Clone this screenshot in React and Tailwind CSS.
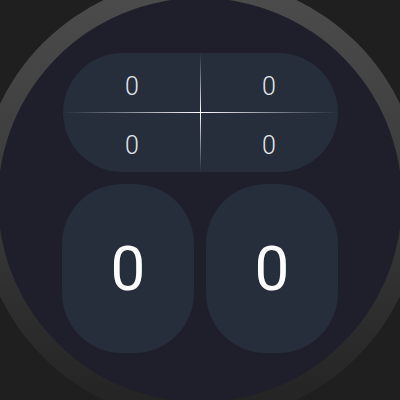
import React from 'react';

const Cell = ({ value }) => (
    <div className="flex items-center justify-center text-[25px] font-light text-[#e4e6ea] leading-none">
        {value}
    </div>
);

const Score = ({ value }) => (
    <div className="w-[132px] h-[169px] rounded-[60px] bg-[#262d3b] flex items-center justify-center text-[62px] text-white leading-none">
        {value}
    </div>
);

const App = () => {
    const sets = [0, 0, 0, 0];

    return (
        <div className="w-[400px] h-[400px] overflow-hidden bg-[#1f1f1f] flex items-center justify-center" style={{ fontFamily: 'Roboto, "Liberation Sans", sans-serif' }}>
            <div className="shrink-0 w-[444px] h-[444px] rounded-full bg-gradient-to-b from-[#4d4d4d] via-[#3a3a3a] to-[#222222] flex items-center justify-center">
                <div className="w-[404px] h-[404px] rounded-full bg-[#1f1f2c] flex flex-col items-center pt-[55px] gap-3">
                    <div className="relative w-[275px] h-[119px] rounded-full bg-[#262d3b] grid grid-cols-2 grid-rows-[62px_57px] pl-[1px] pt-[2px]">
                        {sets.map((v, i) => (
                            <Cell key={i} value={v} />
                        ))}
                        <div className="absolute left-0 right-0 top-[59px] h-px bg-gradient-to-r from-[#262d3b] via-white to-[#262d3b]" />
                        <div className="absolute top-0 bottom-0 left-[137px] w-px bg-gradient-to-b from-[#262d3b] via-white to-[#262d3b]" />
                    </div>
                    <div className="flex gap-3">
                        <Score value={0} />
                        <Score value={0} />
                    </div>
                </div>
            </div>
        </div>
    );
};

export default App;
